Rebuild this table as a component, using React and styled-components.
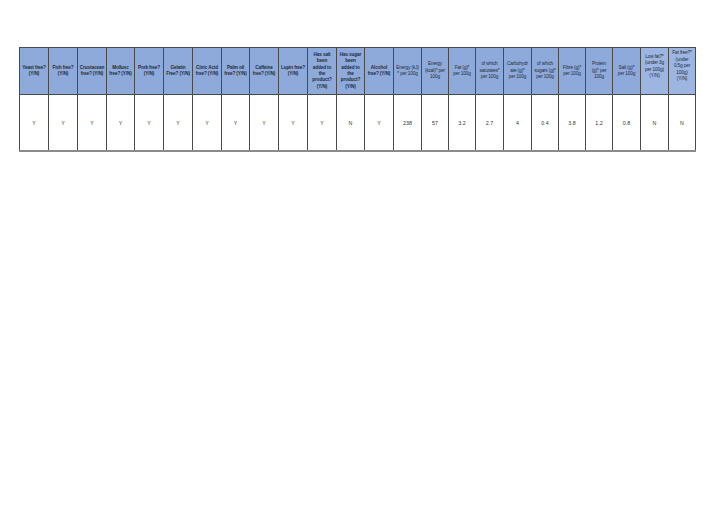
import React from "react";
import styled, { createGlobalStyle } from "styled-components";

const GlobalStyle = createGlobalStyle`
  html, body {
    margin: 0;
    padding: 0;
    background: #ffffff;
  }
  body {
    font-family: "Liberation Sans", Arial, sans-serif;
  }
`;

const columns = [
  { label: "Yeast free?\n(Y/N)", value: "Y", bold: true },
  { label: "Fish free?\n(Y/N)", value: "Y", bold: true },
  { label: "Crustacean\nfree? (Y/N)", value: "Y", bold: true },
  { label: "Mollusc\nfree? (Y/N)", value: "Y", bold: true },
  { label: "Pork free?\n(Y/N)", value: "Y", bold: true },
  { label: "Gelatin\nFree? (Y/N)", value: "Y", bold: true },
  { label: "Citric Acid\nfree? (Y/N)", value: "Y", bold: true },
  { label: "Palm oil\nfree? (Y/N)", value: "Y", bold: true },
  { label: "Caffeine\nfree? (Y/N)", value: "Y", bold: true },
  { label: "Lupin free?\n(Y/N)", value: "Y", bold: true },
  { label: "Has salt\nbeen\nadded to\nthe\nproduct?\n(Y/N)", value: "Y", bold: true },
  { label: "Has sugar\nbeen\nadded to\nthe\nproduct?\n(Y/N)", value: "N", bold: true },
  { label: "Alcohol\nfree? (Y/N)", value: "Y", bold: true },
  { label: "Energy (kJ)\n* per 100g", value: "238" },
  { label: "Energy\n(kcal)* per\n100g", value: "57" },
  { label: "Fat (g)*\nper 100g", value: "3.2" },
  { label: "of which\nsaturates*\nper 100g", value: "2.7" },
  { label: "Carbohydr\nate (g)*\nper 100g", value: "4" },
  { label: "of which\nsugars (g)*\nper 100g", value: "0.4" },
  { label: "Fibre (g)*\nper 100g", value: "3.8" },
  { label: "Protein\n(g)* per\n100g", value: "1.2" },
  { label: "Salt (g)*\nper 100g", value: "0.8" },
  { label: "Low fat?*\n(under 3g\nper 100g)\n(Y/N)", value: "N", light: true },
  { label: "Fat free?*\n(under\n0.5g per\n100g)\n(Y/N)", value: "N", light: true },
];

const widths = [29, 29, 29, 28, 29, 29, 29, 28, 29, 29, 29, 28, 29, 28, 27, 27, 28, 28, 27, 27, 27, 28, 28, 27];

const Page = styled.div`
  padding: 47px 0 0 19px;
`;

const Sheet = styled.table`
  width: 677px;
  border-collapse: collapse;
  table-layout: fixed;
`;

const HeadCell = styled.th`
  height: ${(p) => (p.$light ? "37px" : "46px")};
  padding: 0 0 ${(p) => (p.$light ? "9px" : "0")};
  background: ${(p) => (p.$light ? "#9cb5e1" : "#8eaadb")};
  border: 1px solid #4a4a4a;
  font-size: 4.7px;
  line-height: 6.4px;
  letter-spacing: -0.12px;
  font-weight: ${(p) => (p.$bold ? 700 : 400)};
  color: #1f2a3a;
  text-align: center;
  vertical-align: middle;
  white-space: pre;
`;

const DataCell = styled.td`
  height: 55px;
  padding: 0;
  border: 1px solid #4a4a4a;
  border-bottom: 2px solid #8a8a8a;
  font-size: 5.3px;
  color: #333333;
  text-align: center;
  vertical-align: middle;
`;

export default function App() {
  return (
    <Page>
      <GlobalStyle />
      <Sheet>
        <colgroup>
          {widths.map((w, i) => (
            <col key={i} style={{ width: w }} />
          ))}
        </colgroup>
        <thead>
          <tr>
            {columns.map((c) => (
              <HeadCell key={c.label} $bold={c.bold} $light={c.light}>
                {c.label}
              </HeadCell>
            ))}
          </tr>
        </thead>
        <tbody>
          <tr>
            {columns.map((c) => (
              <DataCell key={c.label}>{c.value}</DataCell>
            ))}
          </tr>
        </tbody>
      </Sheet>
    </Page>
  );
}
